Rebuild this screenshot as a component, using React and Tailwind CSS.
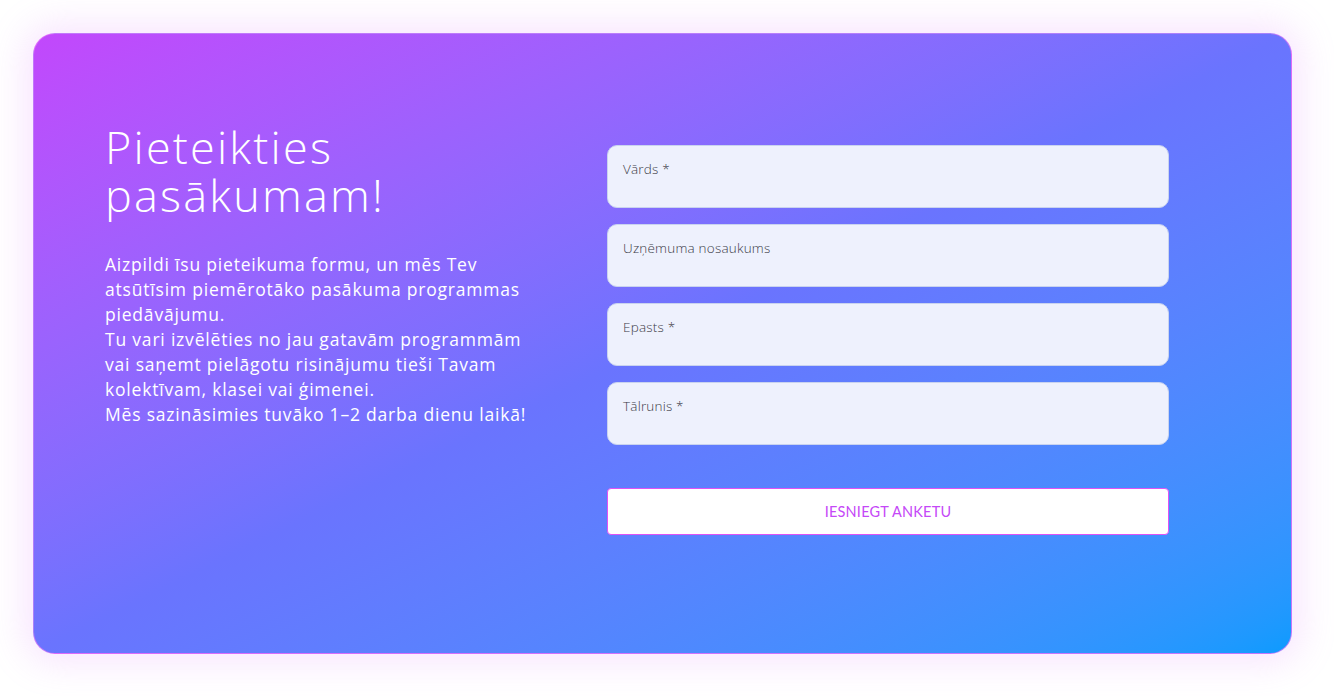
export default function App() {
  const fields = ["Vārds *", "Uzņēmuma nosaukums", "Epasts *", "Tālrunis *"];
  const lines = [
    "Aizpildi īsu pieteikuma formu, un mēs Tev",
    "atsūtīsim piemērotāko pasākuma programmas",
    "piedāvājumu.",
    "Tu vari izvēlēties no jau gatavām programmām",
    "vai saņemt pielāgotu risinājumu tieši Tavam",
    "kolektīvam, klasei vai ģimenei.",
    "Mēs sazināsimies tuvāko 1–2 darba dienu laikā!",
  ];

  return (
    <div className="min-h-[696px] bg-white pl-[33px] pr-[42px] py-[33px]">
      <section className="h-[621px] rounded-[22px] border border-[#e879f9]/70 bg-gradient-to-br from-[#c247fc] via-[#6a74fe] to-[#0a9bfe] shadow-[0_0_36px_8px_rgba(222,130,250,0.22)] flex items-start pl-[71px] pt-[89px]">
        <div className="w-[450px] text-white font-['Open_Sans',sans-serif]">
          <h1 className="text-[45px] leading-[48px] font-light tracking-[2.2px]">
            <span className="block">Pieteikties</span>
            <span className="block">pasākumam!</span>
          </h1>
          <p className="mt-[33px] text-[17.5px] leading-[25px] font-normal tracking-[0.8px]">
            {lines.map((l) => (
              <span key={l} className="block whitespace-nowrap">
                {l}
              </span>
            ))}
          </p>
        </div>

        <form className="ml-[52px] mt-[22px] w-[562px] flex flex-col" onSubmit={(e) => e.preventDefault()}>
          <div className="flex flex-col gap-[16px]">
            {fields.map((f) => (
              <label
                key={f}
                className="h-[63px] rounded-[10px] border border-[#c9d3ef] bg-[#eef1fd] px-[15px] pt-[13px] font-['Open_Sans',sans-serif] text-[13.5px] font-light tracking-[0.2px] text-[#3b3b46]"
              >
                {f}
              </label>
            ))}
          </div>
          <button
            type="submit"
            className="mt-[43px] h-[47px] rounded-[4px] border border-[#e052f5] bg-white font-['Lato',sans-serif] text-[14.5px] text-[#c548f7] tracking-[0.2px]"
          >
            IESNIEGT ANKETU
          </button>
        </form>
      </section>
    </div>
  );
}
